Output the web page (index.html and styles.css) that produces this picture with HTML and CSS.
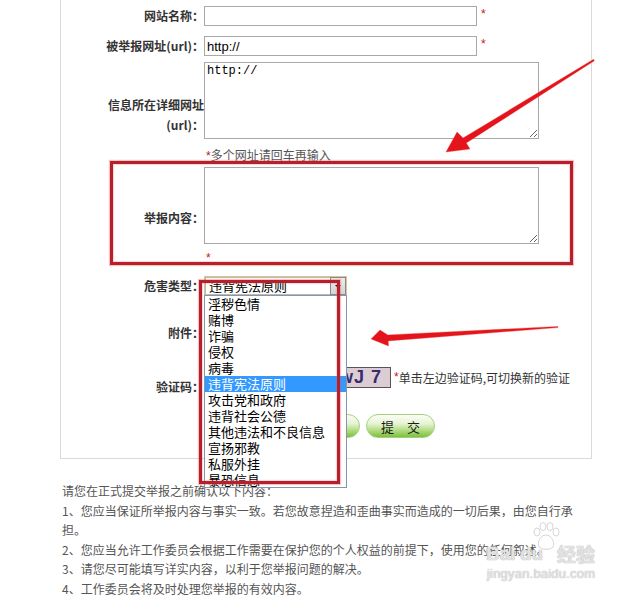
FILE: index.html
```html
<!DOCTYPE html>
<html lang="zh-CN">
<head>
<meta charset="utf-8">
<title>举报</title>
<link rel="stylesheet" href="styles.css">
</head>
<body>
<div class="page">
  <div class="formbox">
    <div class="row r1">
      <div class="lbl">网站名称：</div>
      <div class="fld line"><input class="inp" type="text"><span class="req">*</span></div>
    </div>
    <div class="row r2">
      <div class="lbl">被举报网址(url)：</div>
      <div class="fld line"><input class="inp" type="text" value="http://"><span class="req">*</span></div>
    </div>
    <div class="row r3">
      <div class="lbl lbl-url">信息所在详细网址(url)：</div>
      <div class="fld">
        <textarea class="ta">http://</textarea>
        <div class="note note-url"><span class="req-s">*</span>多个网址请回车再输入</div>
      </div>
    </div>
    <div class="row r4">
      <div class="lbl lbl-content">举报内容：</div>
      <div class="fld">
        <textarea class="ta"></textarea>
        <div class="note note-star"><span class="req-s">*</span></div>
      </div>
    </div>
    <div class="row r5">
      <div class="lbl">危害类型：</div>
      <div class="fld">
        <div class="sel">
          <span class="sel-text">违背宪法原则</span>
          <span class="sel-btn"><span class="tri"></span></span>
          <ul class="sel-list">
            <li>淫秽色情</li>
            <li>赌博</li>
            <li>诈骗</li>
            <li>侵权</li>
            <li>病毒</li>
            <li class="on">违背宪法原则</li>
            <li>攻击党和政府</li>
            <li>违背社会公德</li>
            <li>其他违法和不良信息</li>
            <li>宣扬邪教</li>
            <li>私服外挂</li>
            <li>暴恐信息</li>
          </ul>
        </div>
      </div>
    </div>
    <div class="row r6">
      <div class="lbl">附件：</div>
      <div class="fld file-slot"></div>
    </div>
    <div class="row r7">
      <div class="lbl">验证码：</div>
      <div class="fld line captcha-line">
        <input class="inp code-inp" type="text">
        <span class="captcha">wJ 7</span>
        <span class="req-s star-gap">*</span><span class="hint">单击左边验证码,可切换新的验证</span>
      </div>
    </div>
    <div class="row r8">
      <div class="lbl"></div>
      <div class="fld line btns">
        <span class="btn">重　置</span>
        <span class="btn">提　交</span>
      </div>
    </div>
  </div>

  <div class="notice">
    <p>请您在正式提交举报之前确认以下内容：</p>
    <p>1、您应当保证所举报内容与事实一致。若您故意捏造和歪曲事实而造成的一切后果，由您自行承担。</p>
    <p>2、您应当允许工作委员会根据工作需要在保护您的个人权益的前提下，使用您的任何叙述。</p>
    <p>3、请您尽可能填写详实内容，以利于您举报问题的解决。</p>
    <p>4、工作委员会将及时处理您举报的有效内容。</p>
  </div>

  <div class="mark mark-content"></div>
  <div class="mark mark-type"></div>

  <svg class="arrows" width="635" height="597" viewBox="0 0 635 597">
    <polygon points="446,152 470,149 466.3,143 594.4,60.7 593.6,59.3 463.1,137.9 457,132" />
    <polygon points="371,339 388.5,346 388.2,340.9 558,327.6 558,326.4 387.8,334.9 380,330" />
  </svg>

  <div class="wm">
    <svg class="wm-paw" width="34" height="30" viewBox="0 0 34 30">
      <ellipse cx="8" cy="10" rx="3" ry="4" />
      <ellipse cx="14" cy="4.5" rx="3" ry="4" />
      <ellipse cx="21" cy="4.5" rx="3" ry="4" />
      <ellipse cx="27" cy="10" rx="3" ry="4" />
      <path d="M17 13 C11 13 8 21 10 25 C12 28 22 28 24 25 C26 21 23 13 17 13 Z" />
    </svg>
    <span class="wm-bai">Bai</span><span class="wm-du">du</span><span class="wm-jy">经验</span>
    <span class="wm-url">jingyan.baidu.com</span>
  </div>
</div>
</body>
</html>
```

FILE: styles.css
```css
* { box-sizing: border-box; }

html, body {
  margin: 0;
  padding: 0;
  background: #fff;
}

body {
  font-family: "Noto Sans CJK SC", "Liberation Sans", sans-serif;
  font-size: 12px;
  color: #333;
}

.page {
  position: relative;
  width: 635px;
  height: 597px;
  overflow: hidden;
}

/* ---------- form box ---------- */
.formbox {
  margin-left: 60px;
  width: 532px;
  border: 1px solid #dadada;
  border-top: none;
  padding: 6px 0 20px 39px;
}

.row {
  display: flex;
  align-items: center;
}

.r2 { margin-top: 10px; }
.r3 { margin-top: 6px; }
.r4 { margin-top: 3px; }
.r5 { margin-top: 11px; }
.r6 { margin-top: 22px; }
.r7 { margin-top: 19px; }
.r8 { margin-top: 7px; }

.lbl {
  flex: none;
  width: 104px;
  text-align: right;
  font-weight: bold;
  font-size: 12px;
  line-height: 20px;
  color: #333;
}

.lbl-url { padding-top: 3px; }
.lbl-content { padding-top: 4px; }

.fld {
  flex: none;
  display: flex;
  flex-direction: column;
  align-items: flex-start;
}

.fld.line {
  flex-direction: row;
  align-items: center;
}

.inp {
  width: 273px;
  height: 20px;
  margin: 0;
  padding: 0 2px;
  border: 1px solid #a8a8a8;
  background: #fff;
  font: 13px "Liberation Sans", Arial, sans-serif;
  color: #000;
  outline: none;
}

.req {
  margin-left: 4px;
  color: #c4161c;
  font: 12px "Liberation Sans", Arial, sans-serif;
  line-height: 20px;
  position: relative;
  top: -2px;
}

.req-s {
  color: #c4161c;
  font-family: "Liberation Sans", Arial, sans-serif;
}

.ta {
  display: block;
  width: 335px;
  height: 77px;
  margin: 0;
  padding: 1px 2px;
  border: 1px solid #a8a8a8;
  font: 12px/14px "Liberation Mono", "Courier New", monospace;
  color: #000;
  background: #fff;
  outline: none;
  resize: both;
}

.note {
  font-size: 12px;
  line-height: 16px;
  color: #555;
  white-space: nowrap;
}

.note-url { margin-top: 8px; padding-left: 2px; }
.note-star { margin-top: 5px; padding-left: 2px; height: 16px; }

/* ---------- custom select (opened) ---------- */
.sel {
  position: relative;
  width: 143px;
  height: 20px;
  border: 1px solid #d6c58f;
  box-shadow: inset 0 0 0 1px #b9b9b9;
  background: #fff;
  display: flex;
  align-items: center;
}

.sel-text {
  flex: 1;
  padding-left: 4px;
  font-size: 13px;
  line-height: 18px;
  color: #000;
}

.sel-btn {
  width: 16px;
  height: 18px;
  border: 1px solid #8a8a8a;
  background: linear-gradient(#ececec, #d4d4d4);
  display: flex;
  align-items: center;
  justify-content: center;
}

.tri {
  width: 0;
  height: 0;
  border-left: 3px solid transparent;
  border-right: 3px solid transparent;
  border-top: 3px solid #000;
}

.sel-list {
  position: absolute;
  z-index: 5;
  left: -1px;
  top: 18px;
  width: 143px;
  height: 193px;
  margin: 0;
  padding: 0;
  list-style: none;
  background: #fff;
  border: 1px solid #8496a8;
  overflow: hidden;
}

.sel-list li {
  height: 16px;
  line-height: 16px;
  padding-left: 3px;
  font-size: 13px;
  color: #000;
  white-space: nowrap;
}

.sel-list li.on {
  background: #3399ff;
  color: #fff;
}

/* ---------- attachment / captcha / buttons ---------- */
.file-slot { height: 30px; width: 140px; }

.captcha-line { padding-bottom: 19px; }

.code-inp { width: 120px; height: 20px; margin-right: 6px; }

.captcha {
  width: 61px;
  height: 21px;
  border: 1px solid #555;
  background: #dccdd5;
  color: #3a2b6c;
  font: bold 18px/19px "Liberation Sans", Arial, sans-serif;
  text-align: right;
  padding-right: 8px;
  letter-spacing: 1px;
  white-space: pre;
}

.star-gap { margin-left: 3px; font-size: 12px; line-height: 20px; position: relative; top: -1px; }

.hint {
  font-size: 12px;
  line-height: 20px;
  color: #333;
  white-space: nowrap;
}

.btns { margin-left: 87px; gap: 6px; }

.btn {
  display: flex;
  align-items: center;
  justify-content: center;
  width: 69px;
  height: 24px;
  border-radius: 12px;
  border: 1px solid #a6cf82;
  background: linear-gradient(#fbfdf6 0%, #e6f3d2 40%, #a8d874 75%, #7cbf3d 100%);
  font-size: 13px;
  color: #1a1a1a;
  letter-spacing: 0;
}

/* ---------- notice text ---------- */
.notice {
  margin: 22px 0 0 62px;
  width: 515px;
  font-size: 12px;
  line-height: 19.5px;
  color: #555;
}

.notice p { margin: 0; }

/* ---------- annotations ---------- */
.mark {
  position: absolute;
  z-index: 8;
  border: 3px solid #b5202a;
  box-shadow: 0 0 1px 1px rgba(230, 80, 90, 0.35), inset 0 0 1px 1px rgba(230, 80, 90, 0.25);
}

.mark-content { left: 110px; top: 161px; width: 463px; height: 104px; }
.mark-type { left: 199px; top: 280px; width: 141px; height: 204px; }

.arrows {
  position: absolute;
  z-index: 9;
  left: 0;
  top: 0;
  pointer-events: none;
}

.arrows polygon {
  fill: #e3141b;
  stroke: rgba(240, 60, 60, 0.35);
  stroke-width: 1;
}

/* ---------- watermark ---------- */
.wm {
  position: absolute;
  z-index: 10;
  left: 486px;
  top: 522px;
  width: 120px;
  height: 62px;
  pointer-events: none;
}

.wm-paw {
  position: absolute;
  left: 43px;
  top: 0;
}

.wm-paw ellipse, .wm-paw path {
  fill: rgba(255, 255, 255, 0.5);
  stroke: #d6d6d6;
  stroke-width: 1;
}

.wm-bai, .wm-du, .wm-jy, .wm-url {
  position: absolute;
  color: rgba(255, 255, 255, 0.6);
  text-shadow: 0 0 1px #b8b8b8, 0 0 1px #b8b8b8;
  white-space: nowrap;
}

.wm-bai {
  left: 0;
  top: 21px;
  font: bold 19px/22px "Liberation Sans", Arial, sans-serif;
}

.wm-du {
  left: 34px;
  top: 21px;
  font: bold 19px/22px "Liberation Sans", Arial, sans-serif;
}

.wm-jy {
  left: 71px;
  top: 20px;
  font-size: 19px;
  line-height: 24px;
  font-weight: bold;
}

.wm-url {
  left: 1px;
  top: 45px;
  font: 13px/14px "Liberation Sans", Arial, sans-serif;
  letter-spacing: 0.2px;
}
```
